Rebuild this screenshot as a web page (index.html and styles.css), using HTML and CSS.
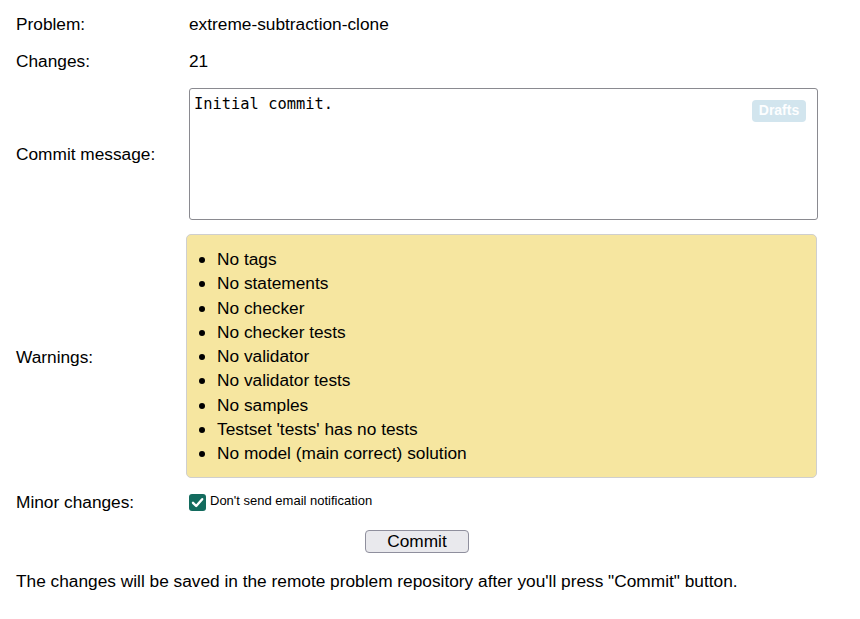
FILE: index.html
```html
<!DOCTYPE html>
<html>
<head>
<meta charset="utf-8">
<link rel="stylesheet" href="styles.css">
</head>
<body>
<div class="page">
  <div class="form">
    <div class="label row-text">Problem:</div>
    <div class="value row-text">extreme-subtraction-clone</div>

    <div class="label row-text">Changes:</div>
    <div class="value row-text">21</div>

    <div class="label row-area">Commit message:</div>
    <div class="value row-area">
      <div class="area-wrap">
        <textarea class="message">Initial commit.</textarea>
        <span class="drafts">Drafts</span>
      </div>
    </div>

    <div class="label row-warn">Warnings:</div>
    <div class="value row-warn">
      <div class="warnings">
        <ul>
          <li>No tags</li>
          <li>No statements</li>
          <li>No checker</li>
          <li>No checker tests</li>
          <li>No validator</li>
          <li>No validator tests</li>
          <li>No samples</li>
          <li>Testset 'tests' has no tests</li>
          <li>No model (main correct) solution</li>
        </ul>
      </div>
    </div>

    <div class="label row-minor">Minor changes:</div>
    <div class="value row-minor minor">
      <span class="check"><svg width="17" height="17" viewBox="0 0 17 17"><path d="M4 8.8 L7.2 12 L13.2 5.2" fill="none" stroke="#fff" stroke-width="2.4" stroke-linecap="round" stroke-linejoin="round"/></svg></span>
      <span class="minor-text">Don't send email notification</span>
    </div>

    <div class="actions">
      <button class="commit">Commit</button>
    </div>
  </div>
  <p class="note">The changes will be saved in the remote problem repository after you'll press "Commit" button.</p>
</div>
</body>
</html>
```

FILE: styles.css
```css
html, body {
  margin: 0;
  padding: 0;
  background: #fff;
}
body {
  font-family: "Liberation Sans", Arial, sans-serif;
  font-size: 17.3px;
  color: #000;
}
.page {
  padding: 6px 0 0 16px;
}
.form {
  display: grid;
  grid-template-columns: 173px 629px;
  align-items: center;
}
.label, .value {
  line-height: 21px;
}
.row-text {
  padding: 8px 0;
}
.row-area {
  padding: 8px 0 7px;
}
.row-warn {
  padding: 7px 0 7px;
}
.row-minor {
  padding: 7px 0 0;
}
.label.row-warn {
  padding-top: 9px;
}
.area-wrap {
  position: relative;
  height: 132px;
}
.message {
  display: block;
  box-sizing: border-box;
  width: 629px;
  height: 132px;
  margin: 0;
  border: 1px solid #8a8a90;
  border-radius: 3px;
  padding: 6px 4px 4px;
  font-family: "DejaVu Sans Mono", monospace;
  font-size: 15.4px;
  line-height: 19px;
  resize: none;
  color: #000;
  background: #fff;
}
.drafts {
  position: absolute;
  top: 12px;
  right: 12px;
  width: 54px;
  height: 22px;
  border-radius: 4px;
  background: #d2e5ee;
  color: #fdfeff;
  font-family: "Liberation Sans", Arial, sans-serif;
  font-weight: 700;
  font-size: 14px;
  line-height: 20px;
  text-align: center;
}
.warnings {
  box-sizing: border-box;
  width: 631px;
  margin-left: -3px;
  height: 244px;
  background: #f6e6a0;
  border: 1px solid #cfcfcf;
  border-radius: 5px;
  padding: 12px 0 0;
}
.warnings ul {
  margin: 0;
  padding: 0 0 0 30px;
  list-style: disc;
}
.warnings li {
  line-height: 24.25px;
}
.warnings li::marker {
  font-size: 19px;
}
.minor {
  display: flex;
  align-items: flex-start;
  gap: 4px;
  align-self: start;
  padding-top: 9px;
}
.check {
  display: block;
  width: 17px;
  height: 17px;
  border-radius: 3px;
  background: #136b5e;
}
.check svg {
  display: block;
}
.minor-text {
  font-size: 13px;
  line-height: 14px;
}
.label.row-minor {
  padding-top: 7px;
}
.actions {
  grid-column: 1 / 3;
  display: flex;
  justify-content: center;
  padding-top: 17px;
}
.commit {
  box-sizing: border-box;
  width: 104px;
  height: 23px;
  margin: 0;
  padding: 0;
  border: 1px solid #8f8f9d;
  border-radius: 4px;
  background: #e9e9ed;
  font-family: "Liberation Sans", Arial, sans-serif;
  font-size: 17.3px;
  line-height: 21px;
  color: #000;
}
.note {
  margin: 18px 0 0;
  line-height: 21px;
}
```
